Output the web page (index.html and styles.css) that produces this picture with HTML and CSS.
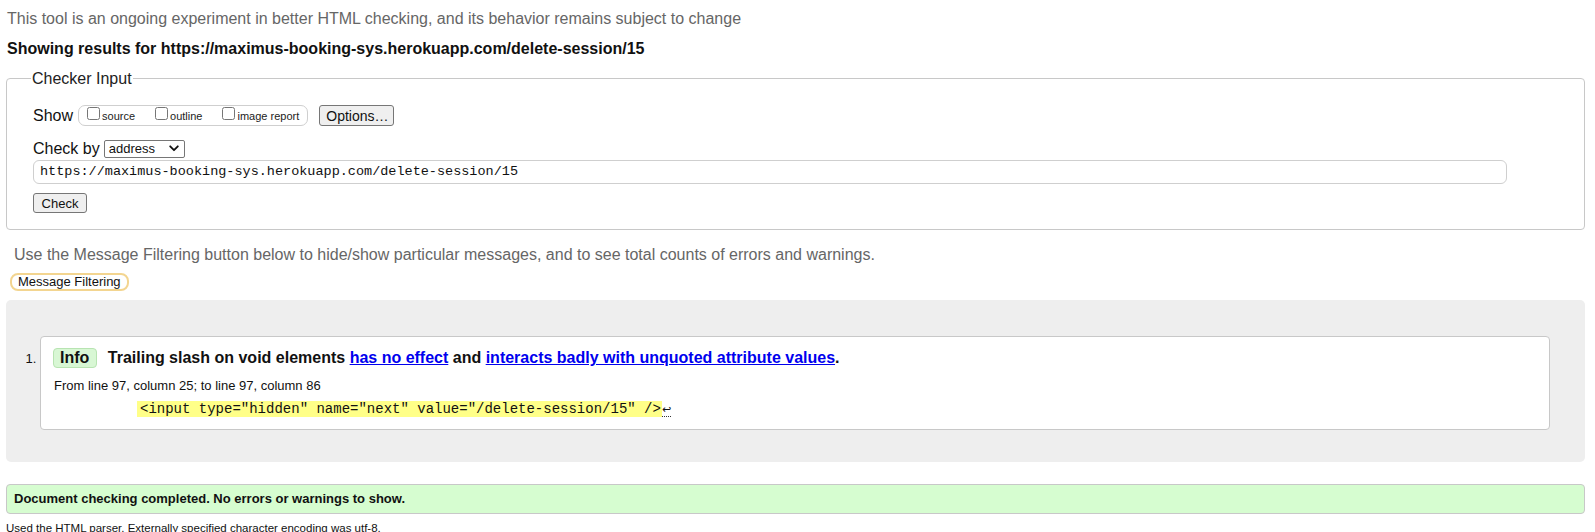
FILE: index.html
```html
<!DOCTYPE html>
<html>
<head>
<meta charset="utf-8">
<title>Nu Html Checker</title>
<link rel="stylesheet" href="styles.css">
</head>
<body>
<p class="note">This tool is an ongoing experiment in better HTML checking, and its behavior remains subject to change</p>
<p class="results">Showing results for https://maximus-booking-sys.herokuapp.com/delete-session/15</p>

<fieldset class="checker">
  <legend>Checker Input</legend>
  <div class="row show-row">
    <span class="lbl">Show</span>
    <span class="show-group">
      <label class="opt"><input type="checkbox"><span>source</span></label>
      <label class="opt"><input type="checkbox"><span>outline</span></label>
      <label class="opt"><input type="checkbox"><span>image report</span></label>
    </span>
    <button class="btn options">Options…</button>
  </div>
  <div class="row checkby-row">
    <span class="lbl">Check by</span>
    <span class="select">address<svg class="chev" width="10" height="7" viewBox="0 0 10 7"><path d="M1.2 1.3 L5 5.2 L8.8 1.3" fill="none" stroke="#111" stroke-width="1.8" stroke-linecap="round" stroke-linejoin="round"/></svg></span>
  </div>
  <div class="url">https://maximus-booking-sys.herokuapp.com/delete-session/15</div>
  <button class="btn check">Check</button>
</fieldset>

<p class="hint">Use the Message Filtering button below to hide/show particular messages, and to see total counts of errors and warnings.</p>
<button class="filter">Message Filtering</button>

<div class="messages">
  <ol class="list">
    <li class="card">
      <p class="title"><span class="badge">Info</span> Trailing slash on void elements <a href="#">has no effect</a> and <a href="#">interacts badly with unquoted attribute values</a>.</p>
      <p class="loc">From line 97, column 25; to line 97, column 86</p>
      <p class="extract"><code><b>&lt;input type="hidden" name="next" value="/delete-session/15" /&gt;</b><span class="lf">↩</span></code></p>
    </li>
  </ol>
</div>

<p class="success">Document checking completed. No errors or warnings to show.</p>
<p class="details">Used the HTML parser. Externally specified character encoding was utf-8.</p>
</body>
</html>
```
FILE: styles.css
```css
html, body {
  margin: 0;
  padding: 0;
  background: #fff;
}
body {
  font-family: "Liberation Sans", Arial, sans-serif;
  color: #111;
  padding: 9px 10px 0 6px;
}
p { margin: 0; }

.note {
  font-size: 16px;
  line-height: 19px;
  color: #666;
  padding-left: 1px;
}
.results {
  margin-top: 11px;
  font-size: 16px;
  line-height: 19px;
  font-weight: bold;
  color: #111;
  padding-left: 1px;
}

.checker {
  margin: 11px 0 0 0;
  border: 1px solid #c8c8c8;
  border-radius: 4px;
  padding: 17px 20px 16px 26px;
  min-width: 0;
}
.checker legend {
  font-size: 16px;
  line-height: 19px;
  padding: 0 1px;
  margin-left: -2px;
  color: #222;
}
.row {
  display: flex;
  align-items: center;
}
.lbl {
  font-size: 16px;
  line-height: 19px;
  color: #111;
}
.show-row { height: 21px; }
.show-group {
  display: flex;
  align-items: center;
  margin-left: 5px;
  height: 19px;
  border: 1px solid #cfcfcf;
  border-radius: 7px;
  padding: 0 8px 0 8px;
}
.opt {
  display: flex;
  align-items: center;
  font-size: 11px;
  color: #222;
}
.opt + .opt { margin-left: 20px; }
.opt input {
  margin: 0 2px 0 0;
  width: 13px;
  height: 13px;
  position: relative;
  top: -2px;
}
.btn {
  font-family: "Liberation Sans", Arial, sans-serif;
  font-size: 13px;
  color: #111;
  background: #efefef;
  border: 1px solid #767676;
  border-radius: 3px;
  padding: 0 6px;
}
.options {
  margin-left: 11px;
  height: 21px;
  width: 75px;
  font-size: 14px;
}
.checkby-row {
  margin-top: 13px;
}
.select {
  margin-left: 4px;
  width: 81px;
  height: 18px;
  box-sizing: border-box;
  border: 1px solid #767676;
  border-radius: 2px;
  font-size: 13px;
  line-height: 16px;
  padding-left: 4px;
  display: flex;
  align-items: center;
  justify-content: space-between;
  padding-right: 5px;
  color: #111;
}
.chev { display: block; }
.url {
  margin-top: 2px;
  width: 1474px;
  height: 24px;
  box-sizing: border-box;
  border: 1px solid #cfcfcf;
  border-radius: 6px;
  font-family: "Liberation Mono", "DejaVu Sans Mono", monospace;
  font-size: 13.5px;
  line-height: 22px;
  padding-left: 6px;
  color: #111;
}
.check {
  display: block;
  margin-top: 9px;
  height: 20px;
  width: 54px;
}

.hint {
  margin-top: 15px;
  padding-left: 8px;
  font-size: 16px;
  line-height: 19px;
  color: #666;
}
.filter {
  display: block;
  margin: 9px 0 0 4px;
  height: 18px;
  box-sizing: border-box;
  padding: 0 6px;
  background: #fff;
  border: 2px solid #f3d590;
  border-radius: 8px;
  font-family: "Liberation Sans", Arial, sans-serif;
  font-size: 13px;
  line-height: 14px;
  color: #111;
}

.messages {
  margin-top: 9px;
  height: 162px;
  box-sizing: border-box;
  background: #eeeeee;
  border-radius: 5px;
  padding: 36px 35px 0 34px;
}
.list {
  margin: 0;
  padding: 0;
  list-style: decimal outside;
  font-size: 13px;
}
.card {
  background: #fff;
  border: 1px solid #c8c8c8;
  border-radius: 4px;
  height: 94px;
  box-sizing: border-box;
  padding: 11px 10px 0 12px;
}
.card::marker {
  font-size: 13px;
  color: #111;
}
.title {
  font-size: 16px;
  line-height: 20px;
  font-weight: bold;
  color: #111;
}
.badge {
  display: inline-block;
  background: #d8f7d4;
  border: 1px solid #b8e4b2;
  border-radius: 4px;
  padding: 0 7px 0 6px;
  line-height: 18px;
  margin-right: 6px;
}
.title a {
  color: #0000ee;
  text-decoration: underline;
}
.loc {
  margin-top: 10px;
  font-size: 13px;
  line-height: 16px;
  padding-left: 1px;
  color: #111;
}
.extract {
  margin-top: 7px;
  padding-left: 84px;
  line-height: 16px;
}
.extract code {
  font-family: "Liberation Mono", "Courier New", monospace;
  font-size: 14px;
}
.extract b {
  font-weight: normal;
  background: #ffff88;
  padding: 0 1px 0 3px;
}
.lf {
  font-size: 11px;
  border-bottom: 1px dotted #333;
  font-family: "DejaVu Sans", sans-serif;
}

.success {
  margin-top: 22px;
  height: 30px;
  box-sizing: border-box;
  background: #d6fdd0;
  border: 1px solid #c8c8c8;
  border-radius: 4px;
  padding-left: 7px;
  font-size: 13px;
  line-height: 28px;
  font-weight: bold;
  color: #111;
}
.details {
  margin-top: 7px;
  font-size: 11.5px;
  line-height: 14px;
  color: #111;
}
```
